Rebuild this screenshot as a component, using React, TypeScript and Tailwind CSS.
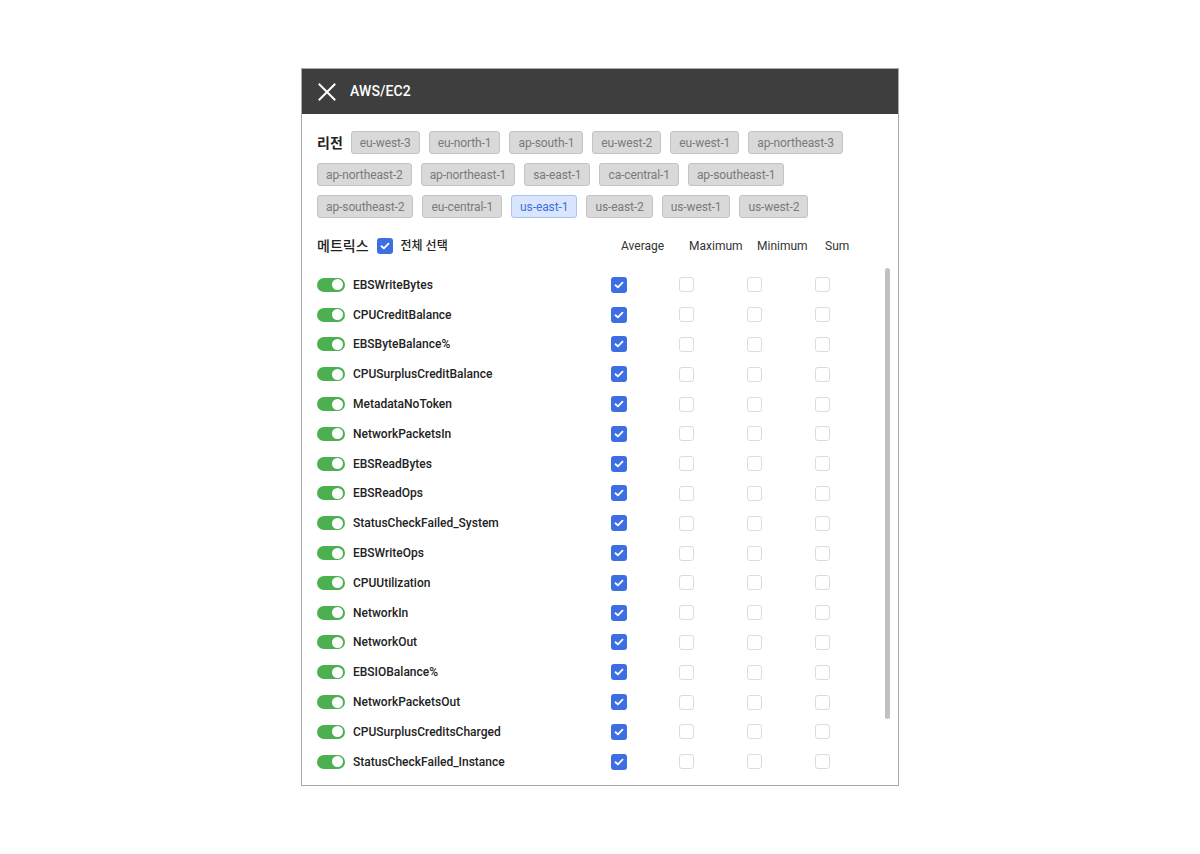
const regions = [
  'eu-west-3',
  'eu-north-1',
  'ap-south-1',
  'eu-west-2',
  'eu-west-1',
  'ap-northeast-3',
  'ap-northeast-2',
  'ap-northeast-1',
  'sa-east-1',
  'ca-central-1',
  'ap-southeast-1',
  'ap-southeast-2',
  'eu-central-1',
  'us-east-1',
  'us-east-2',
  'us-west-1',
  'us-west-2',
]

const metrics = [
  'EBSWriteBytes',
  'CPUCreditBalance',
  'EBSByteBalance%',
  'CPUSurplusCreditBalance',
  'MetadataNoToken',
  'NetworkPacketsIn',
  'EBSReadBytes',
  'EBSReadOps',
  'StatusCheckFailed_System',
  'EBSWriteOps',
  'CPUUtilization',
  'NetworkIn',
  'NetworkOut',
  'EBSIOBalance%',
  'NetworkPacketsOut',
  'CPUSurplusCreditsCharged',
  'StatusCheckFailed_Instance',
]

const stats = ['Average', 'Maximum', 'Minimum', 'Sum']

function Check({ checked }: { checked: boolean }) {
  if (!checked) {
    return <div className="w-[15px] h-[15px] rounded-[3px] border border-[#dcdcdc] bg-white" />
  }
  return (
    <div className="w-4 h-4 rounded-[3px] bg-[#3d6fe3] flex items-center justify-center">
      <svg width="10" height="8" viewBox="0 0 10 8" fill="none">
        <path d="M1.5 4.2 L3.9 6.3 L8.5 1.7" stroke="white" strokeWidth="1.8" strokeLinecap="round" strokeLinejoin="round" />
      </svg>
    </div>
  )
}

function Toggle() {
  return (
    <div className="w-7 h-[14px] rounded-full bg-[#4caf50] flex items-center justify-end pr-[2px]">
      <div className="w-[11px] h-[11px] rounded-full bg-white" />
    </div>
  )
}

export default function App() {
  return (
    <div className="w-[1200px] h-[854px] bg-white flex items-start justify-center pt-[68px] font-['Roboto','Noto_Sans_CJK_KR',sans-serif]">
      <div className="w-[598px] h-[718px] border border-[#a8a8a8] flex flex-col overflow-hidden">
        {/* Header */}
        <div className="h-[45px] bg-[#3e3e3e] flex items-center pl-[16px] gap-[14px] shrink-0">
          <svg width="18" height="18" viewBox="0 0 18 18" fill="none">
            <path d="M1.5 1.5 L16.5 16.5 M16.5 1.5 L1.5 16.5" stroke="white" strokeWidth="2" strokeLinecap="square" />
          </svg>
          <span className="text-white text-[14px] font-medium tracking-[0.1px]">AWS/EC2</span>
        </div>

        {/* Regions */}
        <div className="pl-[15px] pr-[15px] pt-[17px] flex flex-wrap items-center gap-[9px]">
          <span className="text-[14px] font-bold text-[#222] leading-[22px] mr-[-1px]">리전</span>
          {regions.map((r) => (
            <div
              key={r}
              className={
                r === 'us-east-1'
                  ? 'h-[23px] px-[8px] rounded-[3px] border border-[#a9c3f5] bg-[#d9e6fd] text-[#3d6fe3] text-[12px] tracking-[-0.1px] flex items-center'
                  : 'h-[23px] px-[8px] rounded-[3px] border border-[#c4c4c4] bg-[#d9d9d9] text-[#7a7a7a] text-[12px] tracking-[-0.1px] flex items-center'
              }
            >
              {r}
            </div>
          ))}
        </div>

        {/* Metrics header */}
        <div className="pl-[15px] pt-[16px] flex items-center h-[40px] shrink-0">
          <div className="w-[294px] flex items-center">
            <span className="text-[14px] font-medium text-[#222]">메트릭스</span>
            <div className="ml-[8px]">
              <Check checked />
            </div>
            <span className="ml-[8px] text-[12px] text-[#222] font-medium">전체 선택</span>
          </div>
          <div className="flex">
            {stats.map((s) => (
              <div key={s} className="w-[68px] pl-[10px] text-[12px] text-[#333]">
                {s}
              </div>
            ))}
          </div>
        </div>

        {/* Metric list */}
        <div className="flex flex-1 min-h-0">
          <div className="flex-1 flex flex-col pl-[15px] pt-[12px] overflow-hidden">
            {metrics.map((m) => (
              <div key={m} className="h-[29.8px] flex items-center shrink-0">
                <Toggle />
                <span className="ml-2 w-[258px] text-[12px] text-[#222] font-medium">{m}</span>
                <div className="flex items-center">
                  {stats.map((s, i) => (
                    <div key={s} className="w-[68px] flex">
                      <Check checked={i === 0} />
                    </div>
                  ))}
                </div>
              </div>
            ))}
          </div>
          <div className="w-[13px] pt-[10px] shrink-0">
            <div className="w-[5px] h-[451px] rounded-[3px] bg-[#c1c1c1]" />
          </div>
        </div>
      </div>
    </div>
  )
}
